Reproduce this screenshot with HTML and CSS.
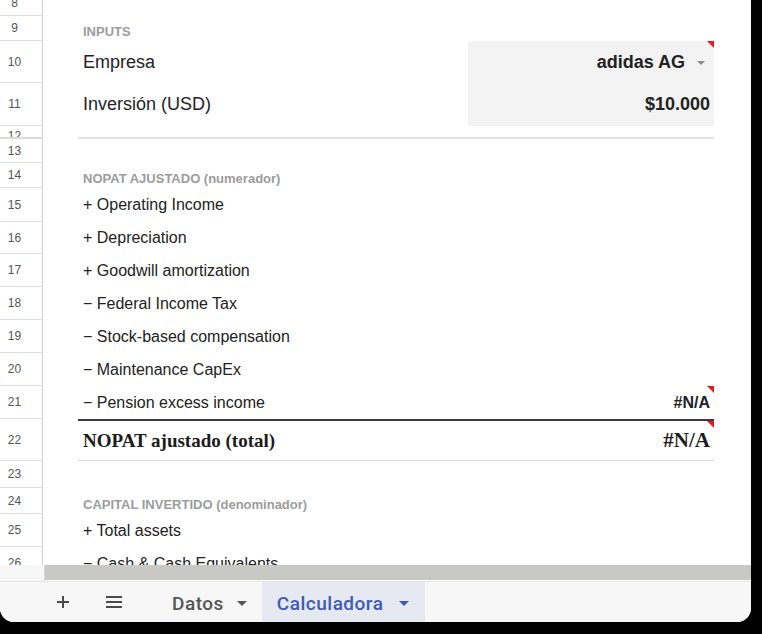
FILE: index.html
```html
<!DOCTYPE html>
<html lang="es">
<head>
<meta charset="utf-8">
<title>Calculadora</title>
<link rel="stylesheet" href="styles.css">
</head>
<body>
<div class="window">
  <div class="grid">
    <div class="rows">
      <div class="row h26"><div class="rh">8</div><div class="ca"></div><div class="cell"></div></div>
      <div class="row h25"><div class="rh">9</div><div class="ca"></div><div class="cell section">INPUTS</div></div>
      <div class="row h42"><div class="rh">10</div><div class="ca"></div>
        <div class="cell">
          <span class="label big">Empresa</span>
          <div class="input">
            <span class="value">adidas AG</span><span class="caret"></span>
            <span class="flag"></span>
          </div>
        </div>
      </div>
      <div class="row h43"><div class="rh">11</div><div class="ca"></div>
        <div class="cell">
          <span class="label big">Inversión (USD)</span>
          <div class="input"><span class="value">$10.000</span></div>
        </div>
      </div>
      <div class="row h13 cut"><div class="rh">12</div><div class="ca"></div><div class="cell rule"></div></div>
      <div class="row h24"><div class="rh">13</div><div class="ca"></div><div class="cell"></div></div>
      <div class="row h25"><div class="rh">14</div><div class="ca"></div><div class="cell section">NOPAT AJUSTADO (numerador)</div></div>
      <div class="row h34"><div class="rh">15</div><div class="ca"></div><div class="cell"><span class="label">+ Operating Income</span></div></div>
      <div class="row h32"><div class="rh">16</div><div class="ca"></div><div class="cell"><span class="label">+ Depreciation</span></div></div>
      <div class="row h33"><div class="rh">17</div><div class="ca"></div><div class="cell"><span class="label">+ Goodwill amortization</span></div></div>
      <div class="row h33"><div class="rh">18</div><div class="ca"></div><div class="cell"><span class="label">− Federal Income Tax</span></div></div>
      <div class="row h33"><div class="rh">19</div><div class="ca"></div><div class="cell"><span class="label">− Stock-based compensation</span></div></div>
      <div class="row h33"><div class="rh">20</div><div class="ca"></div><div class="cell"><span class="label">− Maintenance CapEx</span></div></div>
      <div class="row h33"><div class="rh">21</div><div class="ca"></div>
        <div class="cell"><span class="label">− Pension excess income</span><span class="na">#N/A</span><span class="flag"></span></div>
      </div>
      <div class="row h42"><div class="rh">22</div><div class="ca"></div>
        <div class="cell total"><span class="label">NOPAT ajustado (total)</span><span class="na">#N/A</span><span class="flag"></span></div>
      </div>
      <div class="row h27"><div class="rh">23</div><div class="ca"></div><div class="cell"></div></div>
      <div class="row h26"><div class="rh">24</div><div class="ca"></div><div class="cell section">CAPITAL INVERTIDO (denominador)</div></div>
      <div class="row h33"><div class="rh">25</div><div class="ca"></div><div class="cell"><span class="label">+ Total assets</span></div></div>
      <div class="row h33"><div class="rh">26</div><div class="ca"></div><div class="cell"><span class="label">− Cash &amp; Cash Equivalents</span></div></div>
    </div>
  </div>
  <div class="hscroll"><div class="corner"></div><div class="bar"></div></div>
  <div class="tabbar">
    <span class="tool add">
      <svg width="14" height="14" viewBox="0 0 14 14"><path d="M7 1v12M1 7h12" stroke="#4a4a4a" stroke-width="2"/></svg>
    </span>
    <span class="tool list">
      <svg width="18" height="14" viewBox="0 0 18 14"><path d="M1 2h16M1 7h16M1 12h16" stroke="#4a4a4a" stroke-width="2"/></svg>
    </span>
    <div class="tab">Datos <span class="arrow"></span></div>
    <div class="tab active">Calculadora <span class="arrow"></span></div>
  </div>
</div>
</body>
</html>
```

FILE: styles.css
```css
body {
  margin: 0;
  background-color: #000;
  font-family: "Liberation Sans", Arial, sans-serif;
  color: #222;
}
.window {
  width: 751px;
  height: 622px;
  background-color: #fff;
  border-radius: 0 0 14px 14px;
  overflow: hidden;
  display: flex;
  flex-direction: column;
}
.grid {
  height: 565px;
  overflow: hidden;
}
.rows {
  margin-top: -10px;
}
.row {
  display: grid;
  grid-template-columns: 43px 35px 636px 1fr;
}
.h13 { height: 13px; }
.h24 { height: 24px; }
.h25 { height: 25px; }
.h26 { height: 26px; }
.h27 { height: 27px; }
.h32 { height: 32px; }
.h33 { height: 33px; }
.h34 { height: 34px; }
.h42 { height: 42px; }
.h43 { height: 43px; }

.rh {
  box-sizing: border-box;
  border-right: 1px solid #cfcfcf;
  border-bottom: 1px solid #dedede;
  padding-right: 13px;
  font-size: 12px;
  color: #555;
  display: flex;
  align-items: center;
  justify-content: center;
  overflow: hidden;
}
.cut .rh {
  align-items: flex-start;
  padding-top: 3px;
  border-bottom: 2px solid #dcdcdc;
}
.cell {
  position: relative;
  box-sizing: border-box;
  display: flex;
  align-items: center;
  justify-content: space-between;
  padding: 0 4px 0 5px;
}
.cell.rule {
  border-bottom: 2px solid #e2e2e2;
}
.section {
  align-items: flex-end;
  padding-bottom: 2px;
  font-size: 13px;
  font-weight: bold;
  color: #9c9c9c;
}
.label {
  font-size: 16px;
}
.label.big {
  font-size: 18px;
}
.input {
  position: relative;
  align-self: stretch;
  width: 246px;
  margin-right: -4px;
  padding-right: 4px;
  box-sizing: border-box;
  background-color: #f3f3f3;
  display: flex;
  align-items: center;
  justify-content: flex-end;
}
.value {
  font-size: 18px;
  font-weight: bold;
}
.caret {
  width: 0;
  height: 0;
  margin: 2px 5px 0 12px;
  border-left: 4px solid transparent;
  border-right: 4px solid transparent;
  border-top: 4px solid #8a8a8a;
}
.flag {
  position: absolute;
  top: 0;
  right: 0;
  width: 0;
  height: 0;
  border-left: 7px solid transparent;
  border-top: 7px solid #e21b1b;
}
.na {
  font-size: 16px;
  font-weight: bold;
}
.total {
  border-top: 2px solid #3c3c3c;
  border-bottom: 1px solid #dcdcdc;
}
.total .label, .total .na {
  font-family: "Liberation Serif", "Times New Roman", serif;
  font-weight: bold;
  font-size: 19px;
  color: #1c1c1c;
}
.total .na {
  font-size: 21px;
}

.hscroll {
  display: flex;
  height: 17px;
  border-bottom: 1px solid #e6e6e6;
  box-sizing: border-box;
}
.corner {
  width: 44px;
  border-right: 1px solid #d6d6d6;
  background-color: #f7f7f7;
}
.bar {
  flex: 1;
  height: 15px;
  background-color: #c8c8c4;
}
.tabbar {
  flex: 1;
  display: flex;
  align-items: stretch;
  background-color: #f7f7f7;
  font-family: Roboto, "Liberation Sans", sans-serif;
  font-weight: 500;
  font-size: 19px;
  letter-spacing: 0.5px;
}
.tool {
  display: flex;
  align-items: center;
}
.add {
  margin-left: 56px;
}
.list {
  margin-left: 35px;
}
.tab {
  display: flex;
  align-items: center;
  gap: 13px;
  padding: 2px 15px 0 15px;
  color: #555;
}
.tab:first-of-type {
  margin-left: 34px;
}
.tab .arrow {
  width: 0;
  height: 0;
  border-left: 5px solid transparent;
  border-right: 5px solid transparent;
  border-top: 5px solid #555;
}
.tab.active {
  background-color: #e6e9f1;
  color: #3d5bb8;
  gap: 16px;
  padding-right: 16px;
}
.tab.active .arrow {
  border-top-color: #3d5bb8;
}
```
